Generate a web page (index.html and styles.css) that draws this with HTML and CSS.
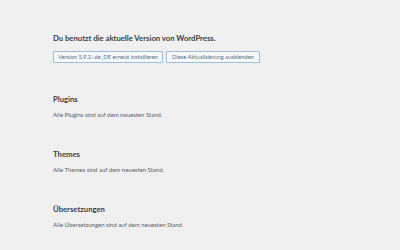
FILE: index.html
```html
<!DOCTYPE html>
<html lang="de">
<head>
<meta charset="utf-8">
<link rel="stylesheet" href="styles.css">
</head>
<body>
<div class="wrap">
  <h2 class="title current">Du benutzt die aktuelle Version von WordPress.</h2>
  <div class="actions">
    <button class="btn btn-wide">Version 5.9.2–de_DE erneut installieren</button>
    <button class="btn btn-hide">Diese Aktualisierung ausblenden</button>
  </div>
  <section class="section">
    <h2 class="title">Plugins</h2>
    <p class="note">Alle Plugins sind auf dem neuesten Stand.</p>
  </section>
  <section class="section">
    <h2 class="title">Themes</h2>
    <p class="note">Alle Themes sind auf dem neuesten Stand.</p>
  </section>
  <section class="section">
    <h2 class="title">Übersetzungen</h2>
    <p class="note">Alle Übersetzungen sind auf dem neuesten Stand.</p>
  </section>
</div>
</body>
</html>
```

FILE: styles.css
```css
html, body {
  margin: 0;
  padding: 0;
  background: #f0f0f1;
}
body {
  font-family: Lato, "Noto Sans", sans-serif;
  color: #3c434a;
  width: 400px;
  height: 250px;
  overflow: hidden;
}
.wrap {
  padding: 33px 0 0 53px;
}
.title {
  margin: 0;
  font-size: 7.7px;
  line-height: 10px;
  font-weight: 700;
  color: #3a4046;
}
.actions {
  display: flex;
  gap: 3px;
  margin-top: 8px;
}
.btn {
  box-sizing: border-box;
  height: 12px;
  padding: 0 4px;
  border: 1px solid #9dbdd8;
  border-radius: 1px;
  background: #f7f8f9;
  color: #55718a;
  font-family: inherit;
  font-size: 5.75px;
  line-height: 10px;
  white-space: nowrap;
}
.btn-wide {
  width: 110px;
}
.btn-hide {
  width: 94px;
}
.section {
  padding-top: 31px;
}
.section + .section {
  padding-top: 30.5px;
}
.note {
  margin: 6.5px 0 0;
  font-size: 6px;
  line-height: 8px;
  color: #5a6066;
}
```
